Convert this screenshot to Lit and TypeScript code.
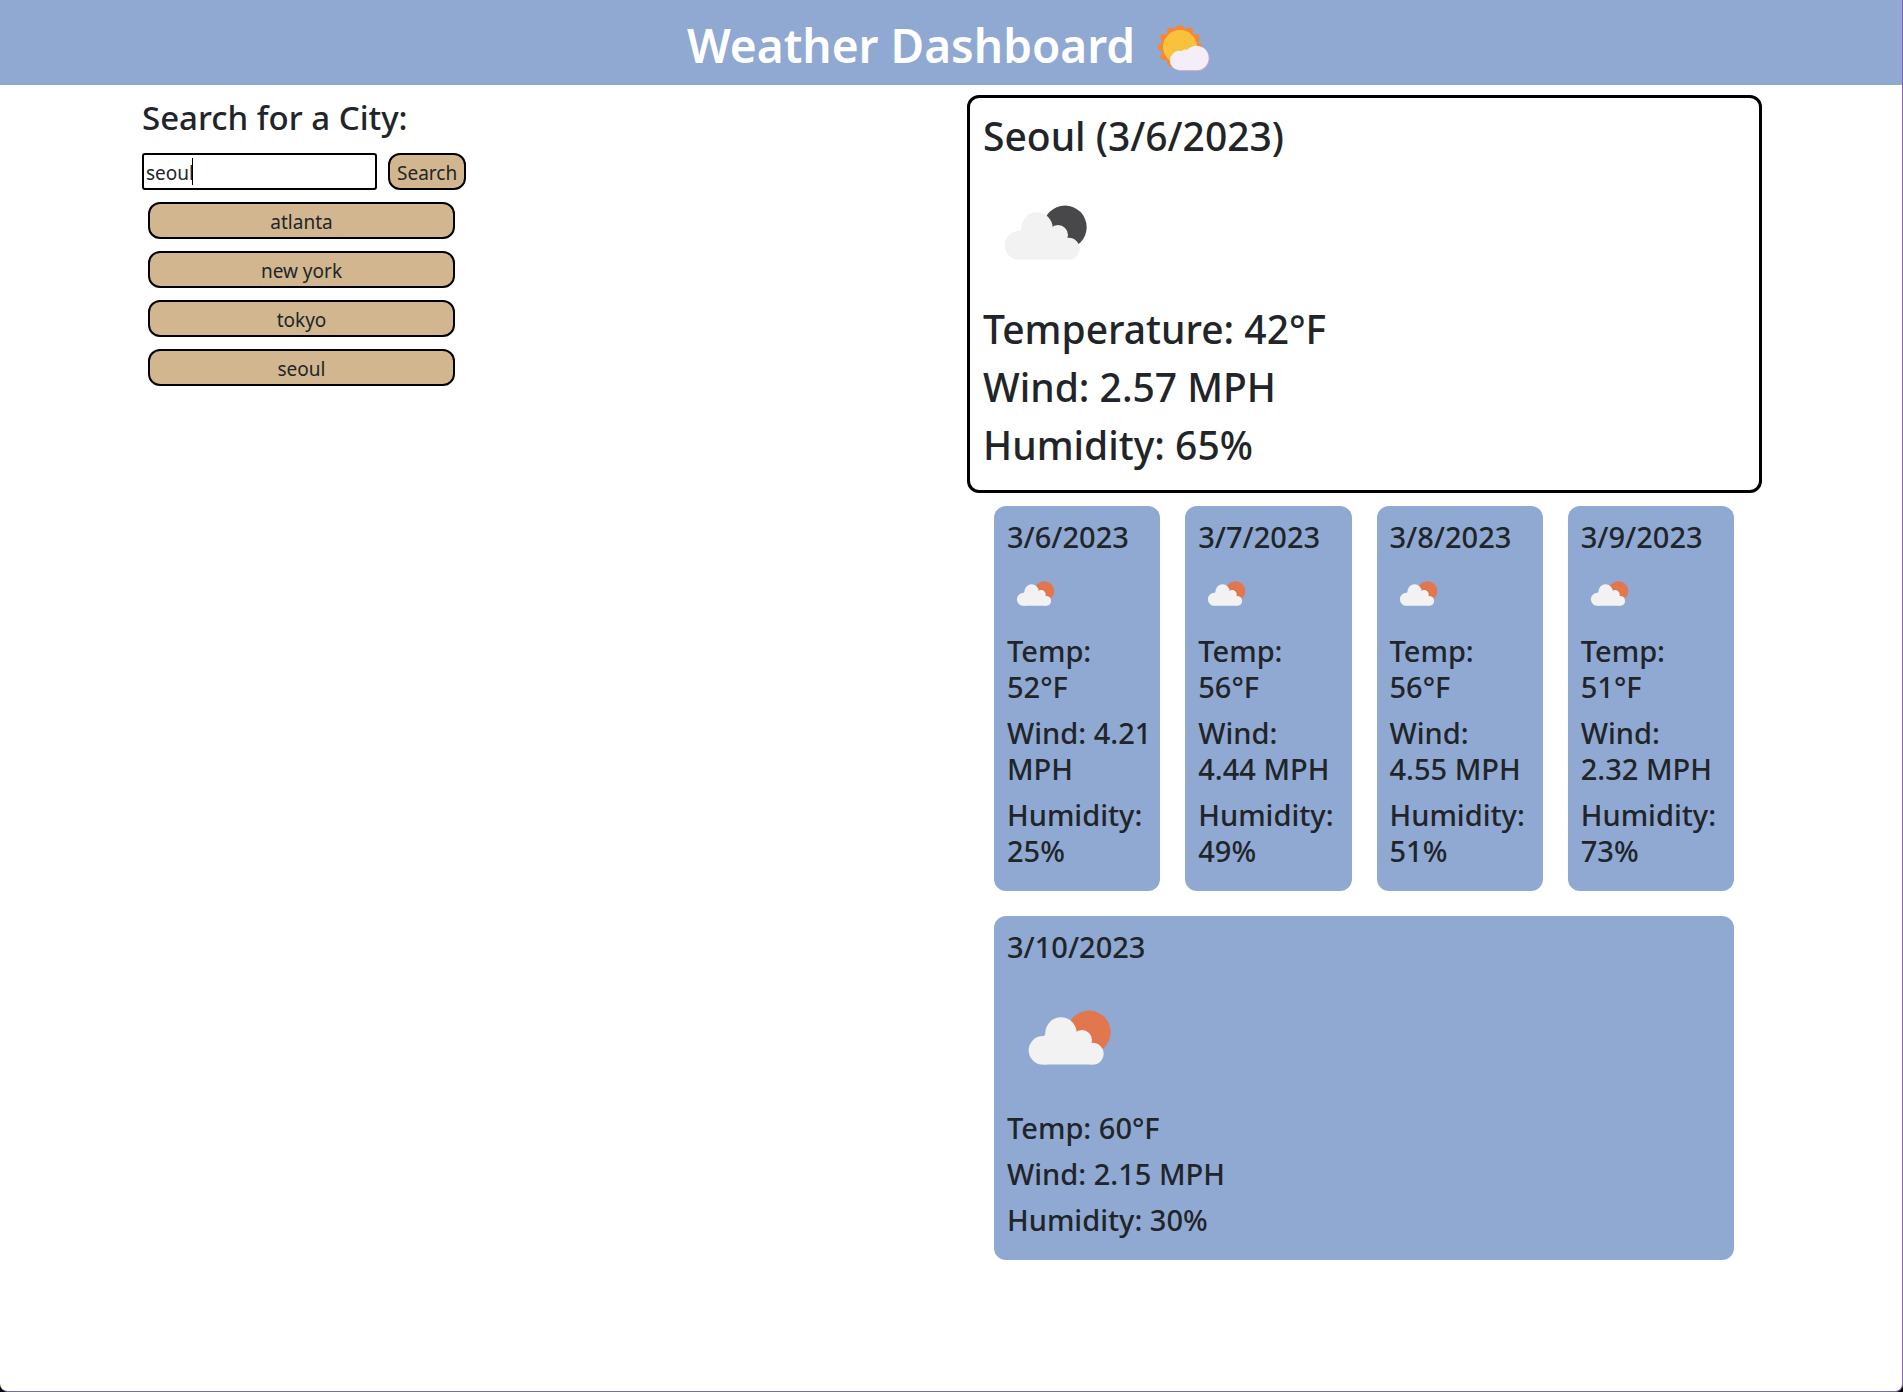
import { LitElement, html, css, svg } from "lit";
import { customElement, property, state } from "lit/decorators.js";

interface Reading {
  date: string;
  temp: number;
  wind: string;
  humidity: number;
}

@customElement("cloud-icon")
class CloudIcon extends LitElement {
  @property({ type: Boolean, reflect: true }) night = false;

  static styles = css`
    :host { display: block; }
    svg { display: block; width: 100%; height: auto; }
    .disc { fill: #e2764f; }
    :host([night]) .disc { fill: #48484a; }
    .cloud { fill: #f2f2f2; }
  `;

  render() {
    return html`
      <svg viewBox="0 1 125 125" role="img" aria-label="Broken clouds">
        <circle class="disc" cx="82" cy="58.2" r="21.7" />
        <g class="cloud">
          <circle cx="36" cy="76.3" r="14.3" />
          <circle cx="54" cy="59" r="15.7" />
          <circle cx="75" cy="66" r="10" />
          <circle cx="85.7" cy="79.7" r="10.9" />
          <path d="M36 63L40 58L69 60L84 70L86 90.6H36Z" />
        </g>
      </svg>
    `;
  }
}

@customElement("app-root")
class AppRoot extends LitElement {
  @state() private cities = ["atlanta", "new york", "tokyo", "seoul"];

  private current: Reading = { date: "3/6/2023", temp: 42, wind: "Wind: 2.57 MPH", humidity: 65 };

  // Non-breaking spaces choose where the wind line wraps in the narrow cards.
  private forecast: Reading[] = [
    { date: "3/6/2023", temp: 52, wind: "Wind:\u00a04.21 MPH", humidity: 25 },
    { date: "3/7/2023", temp: 56, wind: "Wind: 4.44\u00a0MPH", humidity: 49 },
    { date: "3/8/2023", temp: 56, wind: "Wind: 4.55\u00a0MPH", humidity: 51 },
    { date: "3/9/2023", temp: 51, wind: "Wind: 2.32\u00a0MPH", humidity: 73 },
    { date: "3/10/2023", temp: 60, wind: "Wind: 2.15\u00a0MPH", humidity: 30 },
  ];

  static styles = css`
    :host {
      display: block;
      background: #000;
      color: #212529;
      font-family: "Segoe UI", "Noto Sans", sans-serif;
    }
    *, *::before, *::after { box-sizing: border-box; }
    h1, h2, h3, p { margin: 0; font-weight: 500; }
    .page {
      min-height: 100vh;
      background: #fff;
      border: solid #7d68b0;
      border-width: 0 1px 1px 0;
      border-radius: 0 0 8px 8px;
    }
    .header {
      display: flex;
      justify-content: center;
      align-items: center;
      gap: 20px;
      height: 85px;
      padding-top: 4px;
      background: #8fa9d3;
      color: #fff;
    }
    .header h1 { font-size: 46px; line-height: 60px; font-weight: 600; }
    .sun { display: block; width: 60px; height: 56px; }
    .columns {
      display: grid;
      grid-template-columns: 1fr 1fr;
      gap: 30px;
      max-width: 1650px;
      margin: 0 auto;
      padding: 10px 14px 10px 16px;
    }
    .search h2 { font-size: 33px; line-height: 42px; padding-top: 2px; }
    .form { display: flex; gap: 11px; margin-top: 14px; }
    .field { position: relative; }
    .input {
      display: block;
      width: 235px;
      height: 37px;
      padding: 3px 2px 1px;
      border: 2px solid #000;
      border-radius: 3px;
      background: #fff;
      color: #212529;
      font: 19px "Segoe UI", "Noto Sans", sans-serif;
      outline: none;
    }
    .caret {
      position: absolute;
      left: 50px;
      top: 5px;
      width: 1px;
      height: 27px;
      background: #000;
    }
    .button {
      height: 37px;
      padding: 2px 7px 0;
      border: 2px solid #000;
      border-radius: 12px;
      background: #d2b68f;
      color: #212529;
      font: 19px "Segoe UI", "Noto Sans", sans-serif;
    }
    .cities {
      display: flex;
      flex-direction: column;
      gap: 12px;
      width: 307px;
      margin: 12px 6px;
    }
    .current {
      padding: 14px 13px 11px;
      border: 3px solid #000;
      border-radius: 12px;
    }
    .current h2, .current p { font-size: 39px; line-height: 48px; margin-bottom: 10px; }
    .forecast {
      display: grid;
      grid-template-columns: repeat(4, 1fr);
      gap: 25px;
      padding: 13px 28px 13px 27px;
    }
    .day {
      min-width: 0;
      padding: 13px 12px 12px 13px;
      border-radius: 12px;
      background: #8fa9d3;
    }
    .day h3, .day p { font-size: 29px; line-height: 36px; margin-bottom: 10px; }
    .icon { width: 125px; margin-bottom: 10px; }
    .day .icon { width: 57px; margin-bottom: 11px; }
    .day.wide { grid-column: 1 / -1; }
    .day.wide .icon { width: 125px; margin-bottom: 10px; }
  `;

  render() {
    return html`
      <div class="page">
        <header class="header">
          <h1>Weather Dashboard</h1>
          ${this.renderSun()}
        </header>
        <main class="columns">
          <section class="search">
            <h2><label for="city">Search for a City:</label></h2>
            <div class="form">
              <div class="field">
                <input class="input" id="city" type="text" value="seoul" />
                <span class="caret"></span>
              </div>
              <button class="button" type="button">Search</button>
            </div>
            <div class="cities">
              ${this.cities.map((c) => html`<button class="button" type="button">${c}</button>`)}
            </div>
          </section>
          <section>
            <article class="current">
              <h2>Seoul (${this.current.date})</h2>
              <cloud-icon class="icon" night></cloud-icon>
              <p>Temperature: ${this.current.temp}°F</p>
              <p>${this.current.wind}</p>
              <p>Humidity: ${this.current.humidity}%</p>
            </article>
            <div class="forecast">
              ${this.forecast.map(
                (d, i) => html`
                  <article class="day ${i === 4 ? "wide" : ""}">
                    <h3>${d.date}</h3>
                    <cloud-icon class="icon"></cloud-icon>
                    <p>Temp: ${d.temp}°F</p>
                    <p>${d.wind}</p>
                    <p>Humidity: ${d.humidity}%</p>
                  </article>
                `
              )}
            </div>
          </section>
        </main>
      </div>
    `;
  }

  private renderSun() {
    const petals = Array.from({ length: 12 }, (_, i) => {
      const a = (i * Math.PI) / 6;
      return svg`<circle cx=${25 + 18 * Math.sin(a)} cy=${30 - 18 * Math.cos(a)} r="4" />`;
    });
    const cloud = () => svg`
      <circle cx="24.5" cy="43.5" r="9.7" />
      <circle cx="30.5" cy="38.5" r="6" />
      <circle cx="41.5" cy="41" r="12.2" />
      <path d="M24.5 36H40V53.2H24.5Z" />
    `;
    return html`
      <svg class="sun" viewBox="0 0 60 56" aria-hidden="true">
        <g fill="#fb8530">${petals}<circle cx="25" cy="30" r="18.5" /></g>
        <circle cx="25" cy="30" r="17" fill="#f9c23c" />
        <g fill="#c3a5bd" transform="translate(1 1)">${cloud()}</g>
        <g fill="#f3eef8">${cloud()}</g>
      </svg>
    `;
  }
}
